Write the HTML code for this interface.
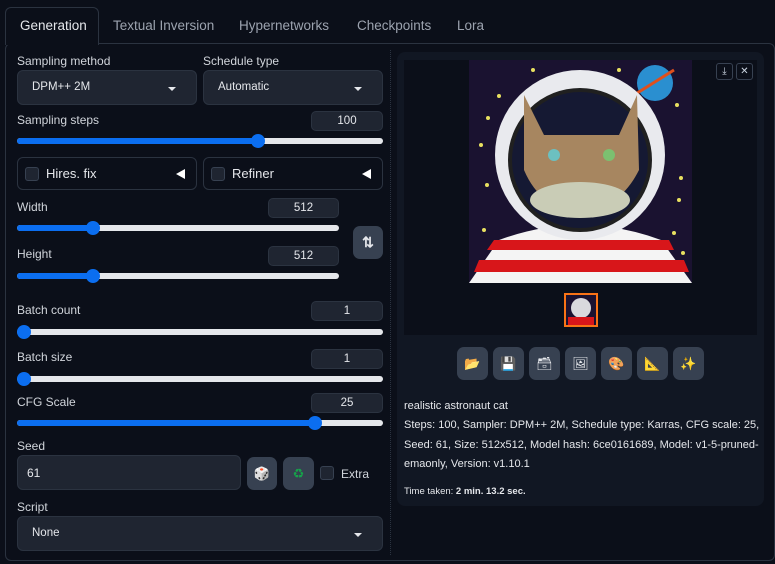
<!DOCTYPE html>
<html><head><meta charset="utf-8"><style>
*{box-sizing:border-box;margin:0;padding:0}
body{width:775px;height:564px;background:#0b0f19;font-family:"Liberation Sans",sans-serif;color:#e5e7eb;position:relative;overflow:hidden;font-size:12px}
.a{position:absolute}
.tab{position:absolute;top:18px;font-size:13.5px;color:#9ca3af}
.lbl{position:absolute;font-size:12px;color:#d1d5db}
.inp{position:absolute;background:#1f2531;border:1px solid #2b3340;border-radius:6px}
.num{position:absolute;background:#1f2531;border:1px solid #2b3340;border-radius:5px;height:20px;font-size:11.5px;text-align:center;line-height:18px;color:#e5e7eb}
.trk{position:absolute;height:6px;border-radius:3px;background:#e5e7eb}
.fill{position:absolute;left:0;top:0;height:6px;border-radius:3px;background:#0b6ef0}
.th{position:absolute;top:-4px;width:14px;height:14px;border-radius:50%;background:#0b6ef0;margin-left:-7px}
.btn{position:absolute;background:#374151;border-radius:7px;width:31px;height:33px;text-align:center;line-height:33px;font-size:13px}
.cb{position:absolute;width:14px;height:14px;border-radius:3px;background:#1f2531;border:1px solid #374151}
.arr{position:absolute;width:0;height:0;border-left:4px solid transparent;border-right:4px solid transparent;border-top:4px solid #e5e7eb}
.tri{position:absolute;width:0;height:0;border-top:5px solid transparent;border-bottom:5px solid transparent;border-right:9px solid #fff}
</style></head><body>
<div class="a" style="left:5px;top:43px;width:770px;height:518px;border:1px solid #2b3340;border-radius:6px"></div>
<div class="a" style="left:5px;top:7px;width:94px;height:38px;border:1px solid #2b3340;border-bottom:none;border-radius:6px 6px 0 0;background:#0b0f19"></div>
<div class="tab" style="left:20px;color:#e5e7eb">Generation</div>
<div class="tab" style="left:113px">Textual Inversion</div>
<div class="tab" style="left:239px">Hypernetworks</div>
<div class="tab" style="left:357px">Checkpoints</div>
<div class="tab" style="left:457px">Lora</div>
<div class="a" style="left:390px;top:50px;height:505px;border-left:1px dotted #2b3340"></div>

<div class="lbl" style="left:17px;top:54px">Sampling method</div>
<div class="inp" style="left:17px;top:70px;width:180px;height:35px"><span class="a" style="left:14px;top:10px;font-size:11.5px">DPM++ 2M</span><div class="arr" style="left:150px;top:16px"></div></div>
<div class="lbl" style="left:203px;top:54px">Schedule type</div>
<div class="inp" style="left:203px;top:70px;width:180px;height:35px"><span class="a" style="left:14px;top:10px;font-size:11.5px">Automatic</span><div class="arr" style="left:150px;top:16px"></div></div>

<div class="lbl" style="left:17px;top:113px">Sampling steps</div>
<div class="num" style="left:311px;top:111px;width:72px">100</div>
<div class="trk" style="left:17px;top:138px;width:366px"><div class="fill" style="width:241px"></div><div class="th" style="left:241px"></div></div>

<div class="inp" style="left:17px;top:157px;width:180px;height:33px;background:#0b0f19"><div class="cb" style="left:7px;top:9px"></div><span class="a" style="left:28px;top:8px;font-size:13px">Hires. fix</span><div class="tri" style="left:158px;top:11px"></div></div>
<div class="inp" style="left:203px;top:157px;width:180px;height:33px;background:#0b0f19"><div class="cb" style="left:7px;top:9px"></div><span class="a" style="left:28px;top:8px;font-size:13px">Refiner</span><div class="tri" style="left:158px;top:11px"></div></div>

<div class="lbl" style="left:17px;top:200px">Width</div>
<div class="num" style="left:268px;top:198px;width:71px">512</div>
<div class="trk" style="left:17px;top:225px;width:322px"><div class="fill" style="width:76px"></div><div class="th" style="left:76px"></div></div>
<div class="lbl" style="left:17px;top:247px">Height</div>
<div class="num" style="left:268px;top:246px;width:71px">512</div>
<div class="trk" style="left:17px;top:273px;width:322px"><div class="fill" style="width:76px"></div><div class="th" style="left:76px"></div></div>
<div class="btn" style="left:353px;top:226px;width:30px;font-weight:bold;font-size:14px">⇅</div>

<div class="lbl" style="left:17px;top:303px">Batch count</div>
<div class="num" style="left:311px;top:301px;width:72px">1</div>
<div class="trk" style="left:17px;top:329px;width:366px"><div class="th" style="left:7px"></div></div>
<div class="lbl" style="left:17px;top:350px">Batch size</div>
<div class="num" style="left:311px;top:349px;width:72px">1</div>
<div class="trk" style="left:17px;top:376px;width:366px"><div class="th" style="left:7px"></div></div>
<div class="lbl" style="left:17px;top:395px">CFG Scale</div>
<div class="num" style="left:311px;top:393px;width:72px">25</div>
<div class="trk" style="left:17px;top:420px;width:366px"><div class="fill" style="width:298px"></div><div class="th" style="left:298px"></div></div>

<div class="lbl" style="left:17px;top:439px">Seed</div>
<div class="inp" style="left:17px;top:455px;width:224px;height:35px"><span class="a" style="left:9px;top:10px;font-size:12px">61</span></div>
<div class="btn" style="left:247px;top:457px;width:30px">🎲</div>
<div class="btn" style="left:283px;top:457px;width:31px;color:#16a34a">♻</div>
<div class="cb" style="left:320px;top:466px"></div>
<div class="lbl" style="left:341px;top:467px">Extra</div>
<div class="lbl" style="left:17px;top:500px">Script</div>
<div class="inp" style="left:17px;top:516px;width:366px;height:35px"><span class="a" style="left:14px;top:10px;font-size:11.5px">None</span><div class="arr" style="left:336px;top:16px"></div></div>

<div class="a" style="left:397px;top:52px;width:367px;height:454px;background:#111723;border-radius:8px"></div>
<div class="a" style="left:404px;top:60px;width:353px;height:275px;background:#0b0f19"></div>
<svg class="a" style="left:469px;top:60px" width="223" height="223" viewBox="0 0 223 223">
<rect width="223" height="223" fill="#1a1230"/>
<g fill="#e8e060"><circle cx="64" cy="10" r="2"/><circle cx="30" cy="36" r="2"/><circle cx="19" cy="58" r="2"/><circle cx="12" cy="85" r="2"/><circle cx="18" cy="125" r="2"/><circle cx="15" cy="170" r="2"/><circle cx="150" cy="10" r="2"/><circle cx="208" cy="45" r="2"/><circle cx="212" cy="118" r="2"/><circle cx="210" cy="140" r="2"/><circle cx="205" cy="173" r="2"/><circle cx="214" cy="193" r="2"/></g>
<circle cx="186" cy="23" r="18" fill="#2a8fd0"/><path d="M165 35 L205 10" stroke="#e0501c" stroke-width="3"/>
<path d="M0 223 L30 180 Q111 150 192 180 L223 223Z" fill="#f4f4f4"/>
<path d="M10 200 L215 200 L220 212 L5 212Z" fill="#d8161a"/><path d="M25 180 L200 180 L205 190 L18 190Z" fill="#d8161a"/>
<circle cx="111" cy="95" r="85" fill="#e9eaee"/>
<circle cx="111" cy="100" r="70" fill="#151933" stroke="#202020" stroke-width="4"/>
<path d="M55 35 L75 75 L150 75 L168 35 L170 110 Q150 150 111 150 Q72 150 55 110Z" fill="#a78660"/>
<ellipse cx="111" cy="140" rx="50" ry="18" fill="#c9ccb6"/>
<circle cx="85" cy="95" r="6" fill="#6cc0c0"/><circle cx="140" cy="95" r="6" fill="#7cc070"/>
</svg>
<div class="a" style="left:564px;top:293px;width:34px;height:34px;border:2px solid #f97316;background:#1a1230;overflow:hidden"><div class="a" style="left:5px;top:3px;width:20px;height:20px;border-radius:50%;background:#d9d9dd"></div><div class="a" style="left:2px;top:22px;width:26px;height:8px;background:#d8161a"></div></div>
<div class="a" style="left:716px;top:63px;width:17px;height:17px;border:1px solid #374151;border-radius:3px;font-size:10px;text-align:center;line-height:15px;color:#cbd5e1">⤓</div>
<div class="a" style="left:736px;top:63px;width:17px;height:17px;border:1px solid #374151;border-radius:3px;font-size:10px;text-align:center;line-height:15px;color:#cbd5e1">✕</div>

<div class="btn" style="left:457px;top:347px">📂</div>
<div class="btn" style="left:493px;top:347px">💾</div>
<div class="btn" style="left:529px;top:347px">🗃</div>
<div class="btn" style="left:565px;top:347px">🖼</div>
<div class="btn" style="left:601px;top:347px">🎨</div>
<div class="btn" style="left:637px;top:347px">📐</div>
<div class="btn" style="left:673px;top:347px">✨</div>

<div class="a" style="left:404px;top:397px;width:356px;font-size:11px;line-height:19.3px;color:#e5e7eb">realistic astronaut cat<br>Steps: 100, Sampler: DPM++ 2M, Schedule type: Karras, CFG scale: 25, Seed: 61, Size: 512x512, Model hash: 6ce0161689, Model: v1-5-pruned-emaonly, Version: v1.10.1</div>
<div class="a" style="left:404px;top:486px;font-size:9.5px;color:#e5e7eb">Time taken: <b>2 min. 13.2 sec.</b></div>
</body></html>
